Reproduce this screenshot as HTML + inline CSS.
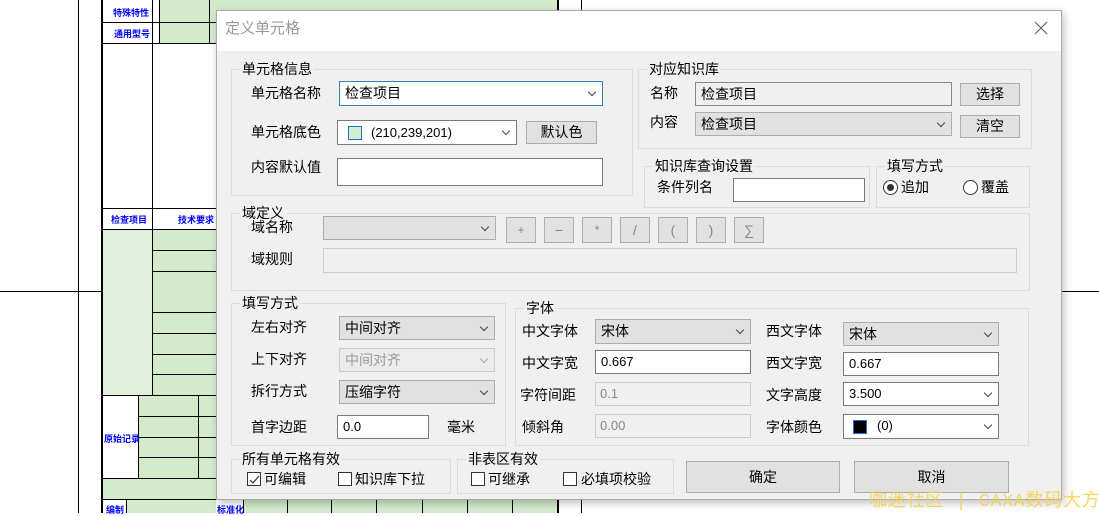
<!DOCTYPE html>
<html><head><meta charset="utf-8"><style>
*{margin:0;padding:0;box-sizing:border-box}
body{width:1099px;height:513px;overflow:hidden;background:#fff;position:relative;font-family:"Liberation Sans","Noto Sans CJK SC",sans-serif;font-size:14px;color:#000}
.a{position:absolute}
.l{position:absolute;background:#000}
.g{position:absolute;background:#d3ebcb}
.bt{position:absolute;color:#00f;font-size:9px;font-weight:bold;white-space:nowrap}
.dlg{position:absolute;left:216px;top:10px;width:846px;height:490px;background:#f0f0f0;border:1px solid #aaa;box-shadow:2px 3px 8px rgba(0,0,0,.25)}
.tb{position:absolute;left:0;top:0;width:844px;height:40px;background:#fff}
.grp{position:absolute;border:1px solid #dcdcdc}
.gt{position:absolute;top:-10px;left:8px;background:#f0f0f0;padding:0 2px;line-height:18px;white-space:nowrap}
.t{position:absolute;white-space:nowrap;line-height:18px}
.box{position:absolute;background:#fff;border:1px solid #7a7a7a;line-height:22px;padding-left:5px;white-space:nowrap}
.cmb{position:absolute;background:#e1e1e1;border:1px solid #adadad;line-height:22px;padding-left:5px;white-space:nowrap}
.dis{position:absolute;background:#f0f0f0;border:1px solid #ccc;color:#888;line-height:22px;padding-left:4px;white-space:nowrap;font-size:13px}
.btn{position:absolute;background:#e1e1e1;border:1px solid #adadad;text-align:center;white-space:nowrap}
.ar{position:absolute;right:7px;top:7px;width:6px;height:6px;border-right:1px solid #444;border-bottom:1px solid #444;transform:rotate(45deg)}
.cb{position:absolute;width:14px;height:14px;border:1px solid #333;background:#fff}
.num{font-size:13px}
</style></head><body>
<!-- background drawing -->
<div class="l" style="left:78px;top:0;width:1px;height:513px"></div>
<div class="l" style="left:0;top:291px;width:1099px;height:1px"></div>
<div class="l" style="left:101px;top:0;width:2px;height:513px"></div>
<div class="g" style="left:159px;top:0;width:400px;height:43px"></div>
<div class="l" style="left:101px;top:22px;width:460px;height:1px"></div>
<div class="l" style="left:101px;top:43px;width:460px;height:1px"></div>
<div class="l" style="left:152px;top:0;width:1px;height:208px"></div>
<div class="l" style="left:159px;top:0;width:1px;height:43px"></div>
<div class="l" style="left:209px;top:0;width:1px;height:43px"></div>
<div class="l" style="left:557px;top:0;width:2px;height:10px"></div>
<div class="l" style="left:581px;top:0;width:1px;height:10px"></div>
<div class="bt" style="left:113px;top:6px">特殊特性</div>
<div class="bt" style="left:114px;top:27px">通用型号</div>
<div class="l" style="left:101px;top:208px;width:120px;height:1px"></div>
<div class="bt" style="left:111px;top:213px">检查项目</div>
<div class="bt" style="left:178px;top:213px">技术要求</div>
<div class="l" style="left:101px;top:229px;width:120px;height:1px"></div>
<div class="a" style="left:103px;top:230px;width:49px;height:165px;background:#e0f0da"></div>
<div class="g" style="left:152px;top:230px;width:70px;height:165px"></div>
<div class="l" style="left:152px;top:208px;width:1px;height:300px"></div>
<div class="l" style="left:152px;top:250px;width:70px;height:1px"></div>
<div class="l" style="left:152px;top:271px;width:70px;height:1px"></div>
<div class="l" style="left:152px;top:312px;width:70px;height:1px"></div>
<div class="l" style="left:152px;top:333px;width:70px;height:1px"></div>
<div class="l" style="left:152px;top:354px;width:70px;height:1px"></div>
<div class="l" style="left:152px;top:374px;width:70px;height:1px"></div>
<div class="l" style="left:101px;top:395px;width:120px;height:1px"></div>
<div class="g" style="left:139px;top:396px;width:83px;height:103px"></div>
<div class="g" style="left:103px;top:478px;width:49px;height:21px"></div>
<div class="l" style="left:138px;top:395px;width:1px;height:83px"></div>
<div class="l" style="left:198px;top:395px;width:1px;height:83px"></div>
<div class="l" style="left:138px;top:416px;width:84px;height:1px"></div>
<div class="l" style="left:138px;top:437px;width:84px;height:1px"></div>
<div class="l" style="left:138px;top:457px;width:84px;height:1px"></div>
<div class="l" style="left:101px;top:478px;width:120px;height:1px"></div>
<div class="bt" style="left:104px;top:432px">原始记录</div>
<div class="l" style="left:101px;top:499px;width:460px;height:1px"></div>
<div class="g" style="left:127px;top:500px;width:430px;height:13px"></div>
<div class="a" style="left:216px;top:500px;width:27px;height:13px;background:#fff"></div>
<div class="l" style="left:126px;top:499px;width:1px;height:14px"></div>
<div class="l" style="left:243px;top:499px;width:1px;height:14px"></div>
<div class="l" style="left:287px;top:499px;width:1px;height:14px"></div>
<div class="l" style="left:331px;top:499px;width:1px;height:14px"></div>
<div class="l" style="left:376px;top:499px;width:1px;height:14px"></div>
<div class="l" style="left:422px;top:499px;width:1px;height:14px"></div>
<div class="l" style="left:467px;top:499px;width:1px;height:14px"></div>
<div class="l" style="left:512px;top:499px;width:1px;height:14px"></div>
<div class="l" style="left:557px;top:499px;width:2px;height:14px"></div>
<div class="l" style="left:581px;top:499px;width:1px;height:14px"></div>
<div class="bt" style="left:106px;top:503px">编制</div>
<div class="bt" style="left:217px;top:503px">标准化</div>

<div class="dlg">
<div class="tb"></div>
<div class="t" style="left:8px;top:9px;color:#999;font-size:15px">定义单元格</div>
<svg class="a" style="left:817px;top:10px" width="14" height="14"><path d="M1 1L13 13M13 1L1 13" stroke="#666" stroke-width="1.2"/></svg>

<div class="grp" style="left:14px;top:58px;width:402px;height:127px"><span class="gt">单元格信息</span></div>
<div class="t" style="left:34px;top:73px">单元格名称</div>
<div class="box" style="left:122px;top:70px;width:264px;height:25px;border-color:#3c7fb1">检查项目<i class="ar"></i></div>
<div class="t" style="left:34px;top:112px">单元格底色</div>
<div class="box" style="left:120px;top:109px;width:180px;height:25px"><span class="a" style="left:10px;top:5px;width:14px;height:14px;background:#d2efc9;border:1px solid #1e73c8"></span><span class="num" style="padding-left:28px">(210,239,201)</span><i class="ar"></i></div>
<div class="btn" style="left:309px;top:110px;width:71px;height:23px;line-height:21px">默认色</div>
<div class="t" style="left:34px;top:147px">内容默认值</div>
<div class="box" style="left:120px;top:147px;width:266px;height:28px"></div>

<div class="grp" style="left:421px;top:58px;width:394px;height:80px"><span class="gt">对应知识库</span></div>
<div class="t" style="left:433px;top:73px">名称</div>
<div class="box" style="left:478px;top:71px;width:257px;height:24px;background:#f0f0f0;border-color:#888">检查项目</div>
<div class="btn" style="left:743px;top:72px;width:60px;height:23px;line-height:21px">选择</div>
<div class="t" style="left:433px;top:102px">内容</div>
<div class="cmb" style="left:478px;top:101px;width:257px;height:24px">检查项目<i class="ar"></i></div>
<div class="btn" style="left:743px;top:104px;width:60px;height:23px;line-height:21px">清空</div>

<div class="grp" style="left:427px;top:155px;width:226px;height:42px"><span class="gt">知识库查询设置</span></div>
<div class="t" style="left:440px;top:167px">条件列名</div>
<div class="box" style="left:516px;top:167px;width:132px;height:24px"></div>
<div class="grp" style="left:659px;top:155px;width:154px;height:42px"><span class="gt">填写方式</span></div>
<div class="a" style="left:666px;top:169px;width:15px;height:15px;border:1px solid #333;border-radius:50%;background:#fff"><span class="a" style="left:3px;top:3px;width:7px;height:7px;border-radius:50%;background:#333"></span></div>
<div class="t" style="left:684px;top:167px">追加</div>
<div class="a" style="left:746px;top:169px;width:15px;height:15px;border:1px solid #333;border-radius:50%;background:#fff"></div>
<div class="t" style="left:764px;top:167px">覆盖</div>

<div class="grp" style="left:14px;top:202px;width:799px;height:78px"><span class="gt">域定义</span></div>
<div class="t" style="left:34px;top:207px">域名称</div>
<div class="cmb" style="left:106px;top:205px;width:173px;height:24px"><i class="ar"></i></div>
<div class="btn" style="left:289px;top:206px;width:30px;height:26px;line-height:24px;color:#888;font-size:12px">+</div>
<div class="btn" style="left:327px;top:206px;width:30px;height:26px;line-height:24px;color:#888">−</div>
<div class="btn" style="left:365px;top:206px;width:30px;height:26px;line-height:24px;color:#888;font-size:12px">*</div>
<div class="btn" style="left:403px;top:206px;width:30px;height:26px;line-height:24px;color:#888">/</div>
<div class="btn" style="left:441px;top:206px;width:30px;height:26px;line-height:24px;color:#888">(</div>
<div class="btn" style="left:479px;top:206px;width:30px;height:26px;line-height:24px;color:#888">)</div>
<div class="btn" style="left:517px;top:206px;width:30px;height:26px;line-height:24px;color:#888">∑</div>
<div class="t" style="left:34px;top:239px">域规则</div>
<div class="dis" style="left:106px;top:237px;width:694px;height:25px"></div>

<div class="grp" style="left:14px;top:292px;width:275px;height:143px"><span class="gt">填写方式</span></div>
<div class="t" style="left:34px;top:307px">左右对齐</div>
<div class="cmb" style="left:122px;top:305px;width:156px;height:24px">中间对齐<i class="ar"></i></div>
<div class="t" style="left:34px;top:339px">上下对齐</div>
<div class="cmb" style="left:122px;top:337px;width:156px;height:24px;color:#999;border-color:#ccc;background:#ececec">中间对齐<i class="ar" style="border-color:#aaa"></i></div>
<div class="t" style="left:34px;top:371px">拆行方式</div>
<div class="cmb" style="left:122px;top:369px;width:156px;height:24px">压缩字符<i class="ar"></i></div>
<div class="t" style="left:34px;top:407px">首字边距</div>
<div class="box num" style="left:120px;top:404px;width:92px;height:24px">0.0</div>
<div class="t" style="left:230px;top:407px">毫米</div>

<div class="grp" style="left:298px;top:297px;width:514px;height:138px"><span class="gt">字体</span></div>
<div class="t" style="left:305px;top:311px">中文字体</div>
<div class="cmb" style="left:378px;top:308px;width:156px;height:25px">宋体<i class="ar"></i></div>
<div class="t" style="left:305px;top:343px">中文字宽</div>
<div class="box num" style="left:378px;top:339px;width:156px;height:24px">0.667</div>
<div class="t" style="left:303px;top:375px">字符间距</div>
<div class="dis" style="left:378px;top:371px;width:156px;height:24px">0.1</div>
<div class="t" style="left:305px;top:407px">倾斜角</div>
<div class="dis" style="left:378px;top:403px;width:156px;height:24px">0.00</div>
<div class="t" style="left:549px;top:311px">西文字体</div>
<div class="cmb" style="left:626px;top:311px;width:156px;height:24px">宋体<i class="ar"></i></div>
<div class="t" style="left:549px;top:343px">西文字宽</div>
<div class="box num" style="left:626px;top:341px;width:156px;height:24px">0.667</div>
<div class="t" style="left:549px;top:375px">文字高度</div>
<div class="box num" style="left:626px;top:371px;width:156px;height:24px">3.500<i class="ar"></i></div>
<div class="t" style="left:549px;top:407px">字体颜色</div>
<div class="box num" style="left:626px;top:403px;width:156px;height:25px"><span class="a" style="left:9px;top:5px;width:14px;height:14px;background:#000;border:1px solid #1e73c8"></span><span style="padding-left:28px">(0)</span><i class="ar"></i></div>

<div class="grp" style="left:14px;top:448px;width:220px;height:35px"><span class="gt">所有单元格有效</span></div>
<div class="cb" style="left:30px;top:461px"><svg class="a" style="left:1px;top:1px" width="11" height="11"><path d="M1 6L4 9L10 2" stroke="#333" fill="none" stroke-width="1.2"/></svg></div>
<div class="t" style="left:47px;top:459px">可编辑</div>
<div class="cb" style="left:121px;top:461px"></div>
<div class="t" style="left:138px;top:459px">知识库下拉</div>
<div class="grp" style="left:240px;top:448px;width:217px;height:35px"><span class="gt">非表区有效</span></div>
<div class="cb" style="left:254px;top:461px"></div>
<div class="t" style="left:271px;top:459px">可继承</div>
<div class="cb" style="left:346px;top:461px"></div>
<div class="t" style="left:364px;top:459px">必填项校验</div>

<div class="btn" style="left:469px;top:450px;width:154px;height:32px;line-height:30px">确定</div>
<div class="btn" style="left:637px;top:450px;width:155px;height:32px;line-height:30px">取消</div>
</div>
<div class="a" style="left:869px;top:486px;color:#f5d04a;font-family:'Liberation Mono','Noto Sans CJK SC',monospace;font-size:18px;letter-spacing:0.8px;white-space:nowrap;opacity:.85">咖迷社区 | CAXA数码大方</div>
</body></html>
